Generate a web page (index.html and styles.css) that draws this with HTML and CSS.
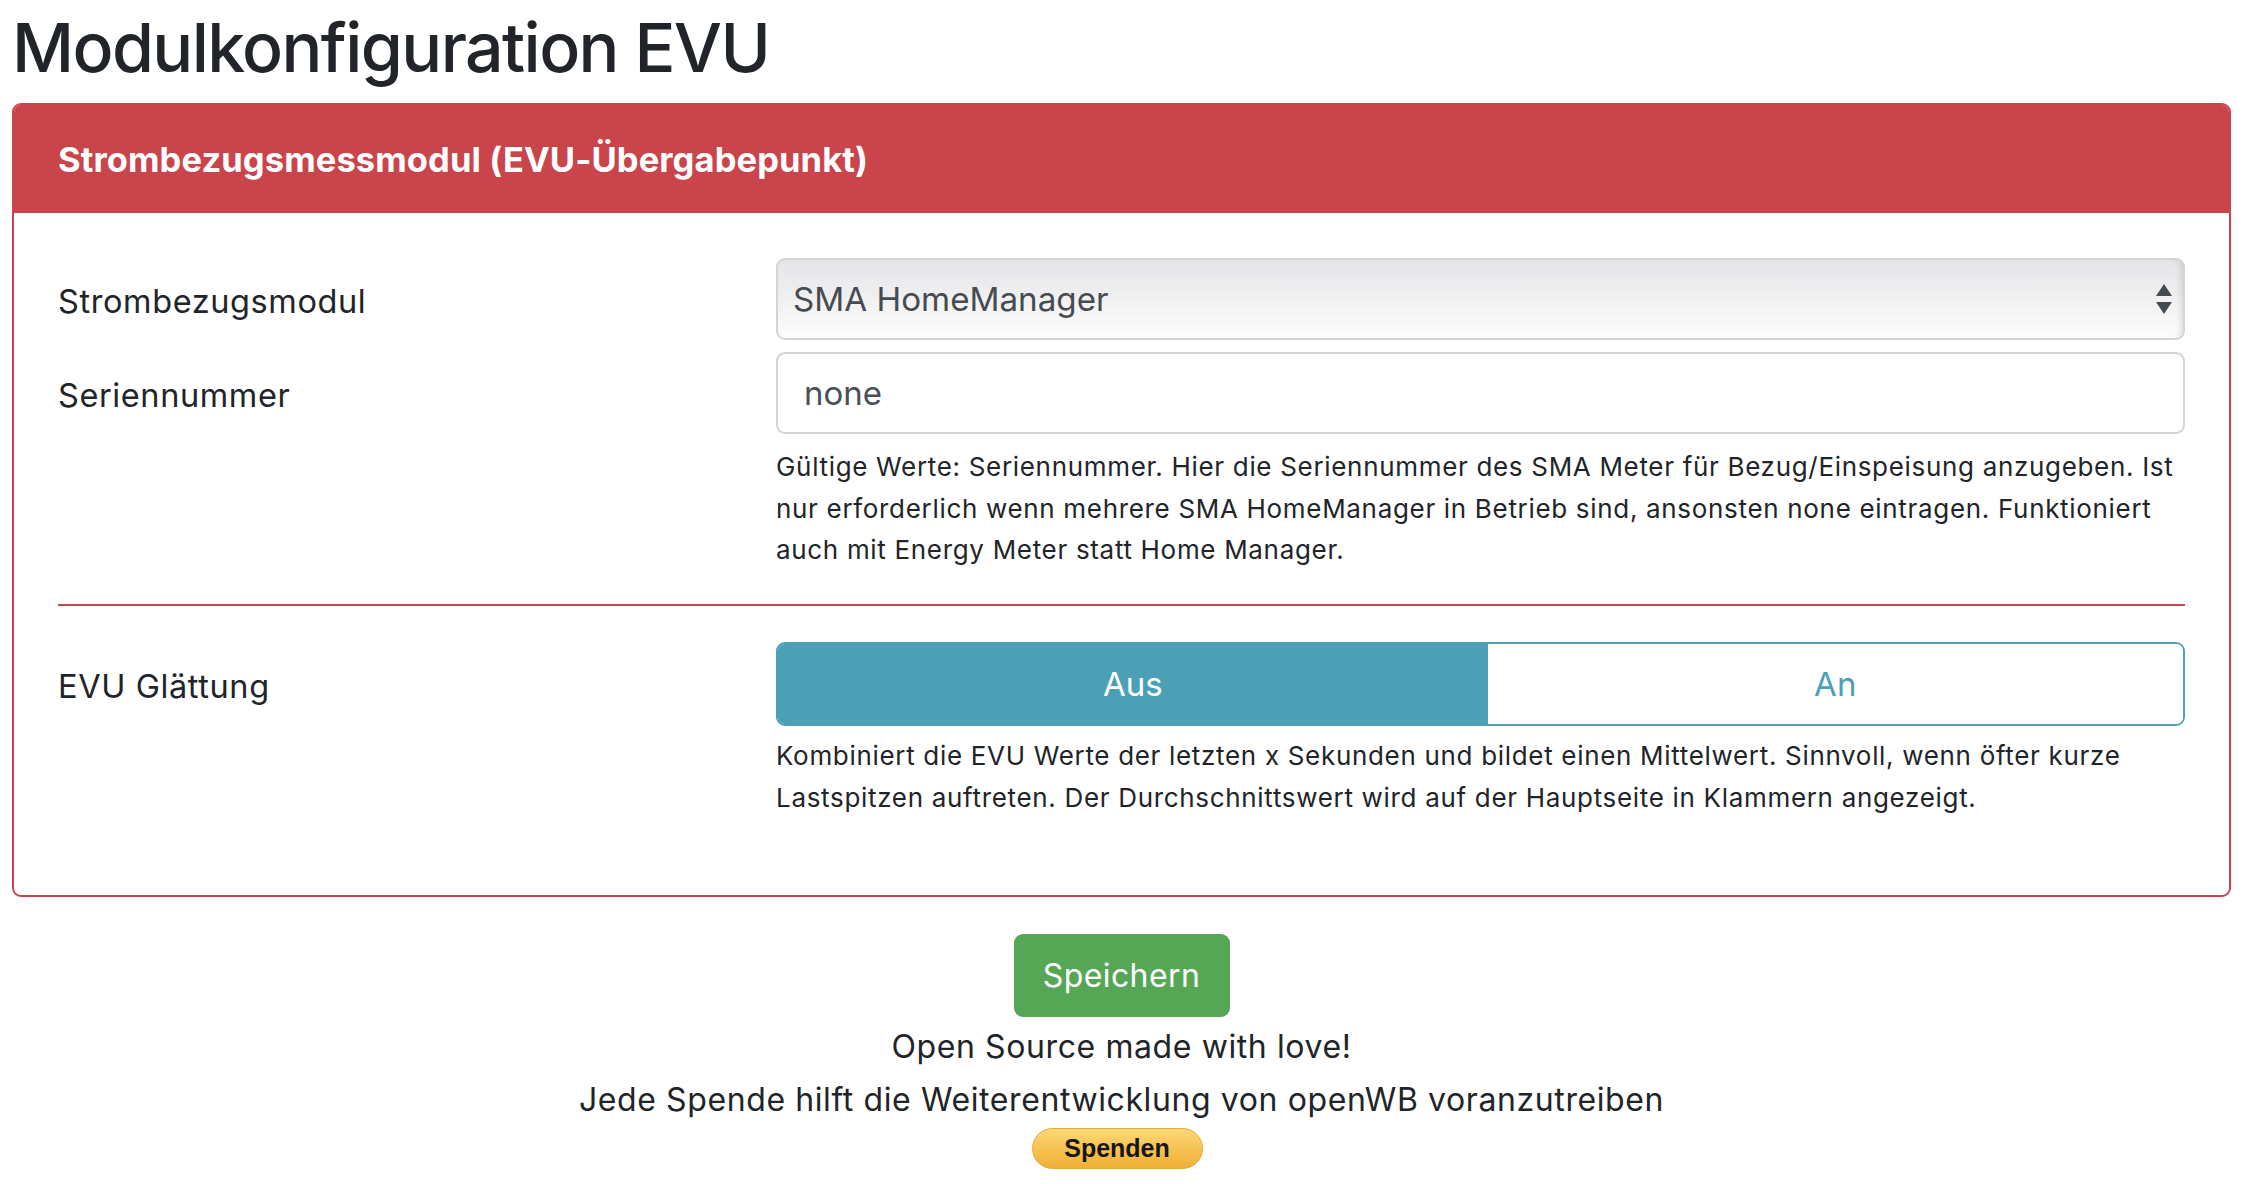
FILE: index.html
```html
<!DOCTYPE html>
<html lang="de">
<head>
<meta charset="utf-8">
<title>Modulkonfiguration EVU</title>
<link rel="stylesheet" href="styles.css">
</head>
<body>
<div class="page">
  <h1 class="title">Modulkonfiguration EVU</h1>
  <div class="card">
    <div class="card-header">Strombezugsmessmodul (EVU-Übergabepunkt)</div>
    <div class="card-body">
      <div class="row">
        <label class="label">Strombezugsmodul</label>
        <div class="select-wrap">
          <select class="select">
            <option>SMA HomeManager</option>
          </select>
          <svg class="select-arrow" width="18" height="32" viewBox="0 0 18 32">
            <path d="M9 0 L17 12 L1 12 Z" fill="#464b51"/>
            <path d="M1 18 L17 18 L9 30 Z" fill="#464b51"/>
          </svg>
        </div>
      </div>
      <div class="row row-input">
        <label class="label">Seriennummer</label>
        <input class="input" type="text" value="none">
      </div>
      <div class="row">
        <div></div>
        <p class="help">Gültige Werte: Seriennummer. Hier die Seriennummer des SMA Meter für Bezug/Einspeisung anzugeben. Ist nur erforderlich wenn mehrere SMA HomeManager in Betrieb sind, ansonsten none eintragen. Funktioniert auch mit Energy Meter statt Home Manager.</p>
      </div>
      <hr class="divider">
      <div class="row">
        <label class="label">EVU Glättung</label>
        <div class="toggle">
          <button class="toggle-btn active">Aus</button>
          <button class="toggle-btn">An</button>
        </div>
      </div>
      <div class="row">
        <div></div>
        <p class="help help-toggle">Kombiniert die EVU Werte der letzten x Sekunden und bildet einen Mittelwert. Sinnvoll, wenn öfter kurze Lastspitzen auftreten. Der Durchschnittswert wird auf der Hauptseite in Klammern angezeigt.</p>
      </div>
    </div>
  </div>
  <div class="footer">
    <button class="save">Speichern</button>
    <p class="foot-line">Open Source made with love!</p>
    <p class="foot-line">Jede Spende hilft die Weiterentwicklung von openWB voranzutreiben</p>
    <button class="donate">Spenden</button>
  </div>
</div>
</body>
</html>
```

FILE: styles.css
```css
html, body {
  margin: 0;
  padding: 0;
  background: #ffffff;
}
body {
  font-family: Inter, "Liberation Sans", sans-serif;
  color: #212529;
}
.page {
  padding: 0 13px 0 12px;
}
.title {
  margin: 6px 0 14px 0;
  padding-left: 0;
  font-size: 68px;
  line-height: 83px;
  font-weight: 500;
  letter-spacing: -1.6px;
  color: #212529;
}
.card {
  border: 2px solid #c9444b;
  border-radius: 9px;
  overflow: hidden;
}
.card-header {
  height: 108px;
  display: flex;
  align-items: center;
  padding-left: 44px;
  background: #c9444b;
  color: #ffffff;
  font-size: 34.5px;
  font-weight: 700;
  letter-spacing: 0.1px;
}
.card-body {
  padding: 45px 44px 76px 44px;
}
.row {
  display: grid;
  grid-template-columns: 718px 1fr;
  align-items: center;
}
.row-input {
  margin-top: 12px;
}
.label {
  padding-top: 6px;
  font-size: 32.5px;
  line-height: 48px;
  letter-spacing: 0.6px;
  color: #212529;
}
.select-wrap {
  position: relative;
}
.select {
  display: block;
  width: 100%;
  height: 82px;
  box-sizing: border-box;
  appearance: none;
  -webkit-appearance: none;
  border: 2px solid #d3d4d6;
  border-radius: 9px;
  background: linear-gradient(#e4e5e7, #f3f3f4 60%, #fdfdfd);
  box-shadow: inset -6px 0 6px -4px rgba(0,0,0,0.12);
  padding: 0 60px 0 15px;
  font-family: Inter, "Liberation Sans", sans-serif;
  font-size: 33.2px;
  color: #464b51;
}
.select-arrow {
  position: absolute;
  right: 12px;
  top: 26px;
}
.input {
  display: block;
  width: 100%;
  height: 82px;
  box-sizing: border-box;
  border: 2px solid #d3d4d6;
  border-radius: 9px;
  background: #ffffff;
  padding: 0 26px;
  font-family: Inter, "Liberation Sans", sans-serif;
  font-size: 33px;
  color: #495057;
}
.help {
  margin: 12px 0 0 0;
  font-size: 26px;
  line-height: 41.7px;
  letter-spacing: 0.68px;
  color: #212529;
}
.help-toggle {
  margin-top: 9px;
}
.divider {
  margin: 33px 0 36px 0;
  border: 0;
  height: 2px;
  background: #c9444b;
}
.toggle {
  display: flex;
  height: 84px;
  box-sizing: border-box;
  border: 2px solid #4e9fb2;
  border-radius: 9px;
  overflow: hidden;
}
.toggle-btn {
  flex: 1;
  border: 0;
  margin: 0;
  background: #ffffff;
  color: #4ca0b5;
  font-family: Inter, "Liberation Sans", sans-serif;
  font-size: 33px;
}
.toggle-btn.active {
  flex: 0 0 calc(50% + 7px);
  background: #4ca0b5;
  color: #ffffff;
}
.footer {
  display: flex;
  flex-direction: column;
  align-items: center;
  padding-top: 37px;
}
.save {
  width: 216px;
  height: 83px;
  border: 0;
  border-radius: 9px;
  background: #55a756;
  color: #ffffff;
  font-family: Inter, "Liberation Sans", sans-serif;
  font-size: 32px;
  letter-spacing: 0.4px;
}
.foot-line {
  margin: 0;
  font-size: 32px;
  line-height: 53px;
  letter-spacing: 0.6px;
  text-align: center;
  color: #212529;
}
.foot-line:first-of-type {
  margin-top: 3px;
}
.donate {
  margin-top: 2px;
  margin-left: -9px;
  width: 171px;
  height: 41px;
  border: 1px solid #e2a93b;
  border-radius: 21px;
  background: linear-gradient(#fdd978, #f6c04f 55%, #f0b039);
  color: #161616;
  font-family: "Liberation Sans", Arial, sans-serif;
  font-weight: 700;
  font-size: 25px;
  padding: 0;
}
```
